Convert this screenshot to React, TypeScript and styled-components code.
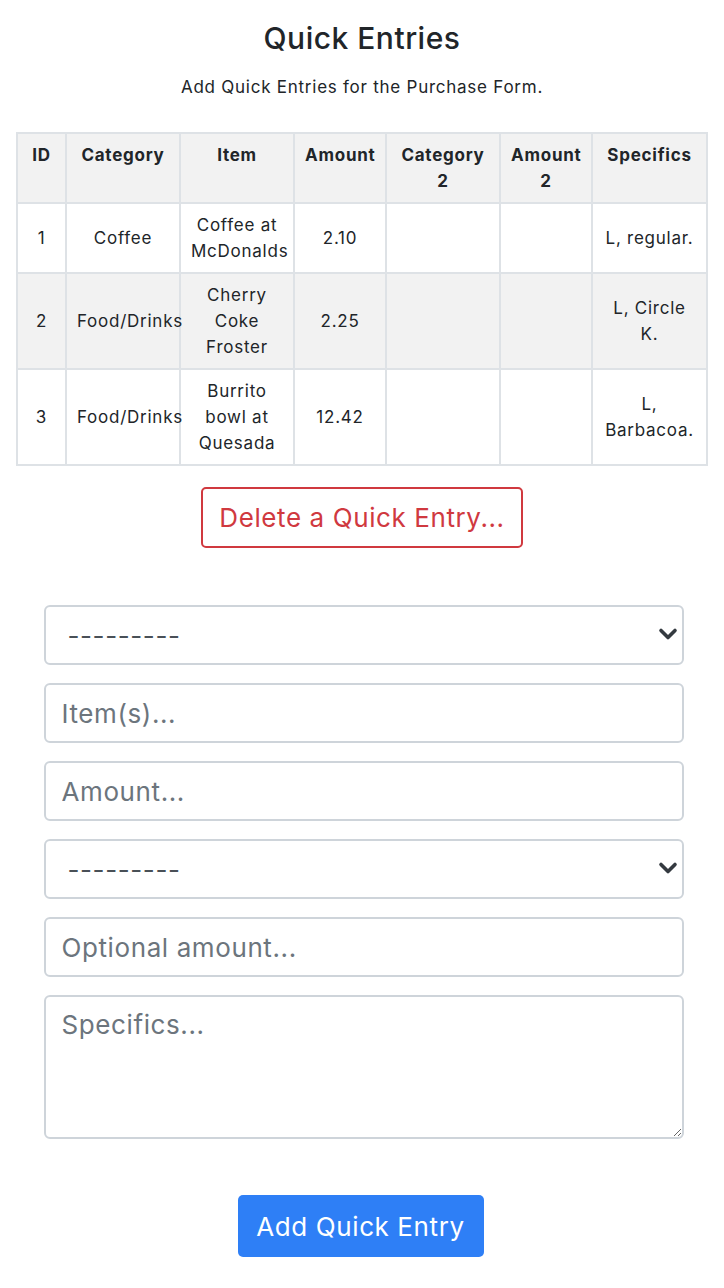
import React from "react";
import styled, { createGlobalStyle } from "styled-components";

const Global = createGlobalStyle`
  html, body { margin: 0; padding: 0; background: #fff; }
  body { font-family: Inter, Roboto, "Liberation Sans", sans-serif; color: #212529; }
  * { box-sizing: border-box; }
`;

const Page = styled.div`
  width: 724px;
  padding: 18px 16px 30px;
  display: flex;
  flex-direction: column;
  align-items: center;
`;

const Title = styled.h1`
  margin: 0;
  font-size: 30px;
  font-weight: 500;
  line-height: 40px;
  letter-spacing: 0.5px;
`;

const Subtitle = styled.p`
  margin: 16px 0 0;
  font-size: 17px;
  line-height: 26px;
  letter-spacing: 0.75px;
`;

const Table = styled.table`
  margin-top: 32px;
  width: 690px;
  border-collapse: collapse;
  font-size: 17px;
  line-height: 26px;
  letter-spacing: 0.75px;
  table-layout: fixed;
`;

const Th = styled.th<{ $w: number }>`
  width: ${(p) => p.$w}px;
  border: 2px solid #dee2e6;
  padding: 8px 10px;
  font-weight: 700;
  vertical-align: top;
  text-align: center;
  background: #f2f2f2;
`;

const Tr = styled.tr<{ $striped?: boolean }>`
  background: ${(p) => (p.$striped ? "#f2f2f2" : "#fff")};
`;

const Td = styled.td`
  border: 2px solid #dee2e6;
  padding: 8px 10px;
  text-align: center;
  vertical-align: middle;
  overflow: visible;
`;

const DeleteButton = styled.button`
  margin-top: 21px;
  width: 322px;
  height: 61px;
  border: 2px solid #d0393f;
  border-radius: 5px;
  background: #fff;
  color: #d0393f;
  font-family: inherit;
  font-size: 26px;
  letter-spacing: 0.6px;
`;

const Form = styled.form`
  margin: 57px 0 0 3px;
  width: 640px;
  display: flex;
  flex-direction: column;
  gap: 18px;
  align-items: center;
`;

const fieldBase = `
  width: 640px;
  border: 2px solid #ced4da;
  border-radius: 6px;
  background: #fff;
  font-family: Inter, Roboto, "Liberation Sans", sans-serif;
  font-size: 26px;
  letter-spacing: 0.6px;
  color: #495057;
  outline: none;
  &::placeholder { color: #6c757d; }
`;

const SelectWrap = styled.div`
  position: relative;
  width: 640px;
`;

const Select = styled.select`
  ${fieldBase}
  height: 60px;
  padding: 0 40px 0 22px;
  appearance: none;
  color: #495057;
`;

const Chevron = styled.svg`
  position: absolute;
  right: 6px;
  top: 22px;
  pointer-events: none;
`;

const Input = styled.input`
  ${fieldBase}
  height: 60px;
  padding: 0 16px;
`;

const TextArea = styled.textarea`
  ${fieldBase}
  height: 144px;
  padding: 10px 16px;
  resize: vertical;
  line-height: 36px;
`;

const AddButton = styled.button`
  margin: 38px 0 0 -6px;
  width: 246px;
  height: 62px;
  border: none;
  border-radius: 5px;
  background: #2e7ff6;
  color: #fff;
  font-family: inherit;
  font-size: 26px;
  letter-spacing: 0.6px;
`;

const cols = [
  { label: "ID", w: 49 },
  { label: "Category", w: 114 },
  { label: "Item", w: 114 },
  { label: "Amount", w: 92 },
  { label: "Category 2", w: 114 },
  { label: "Amount 2", w: 92 },
  { label: "Specifics", w: 115 },
];

const rows = [
  ["1", "Coffee", "Coffee at McDonalds", "2.10", "", "", "L, regular."],
  ["2", "Food/Drinks", "Cherry Coke Froster", "2.25", "", "", "L, Circle K."],
  ["3", "Food/Drinks", "Burrito bowl at Quesada", "12.42", "", "", "L, Barbacoa."],
];

function ChevronIcon() {
  return (
    <Chevron width="20" height="14" viewBox="0 0 20 14">
      <path d="M3 3.5 L10 10.5 L17 3.5" fill="none" stroke="#343a40" strokeWidth="3.6" strokeLinecap="round" strokeLinejoin="round" />
    </Chevron>
  );
}

export default function App() {
  return (
    <>
      <Global />
      <Page>
        <Title>Quick Entries</Title>
        <Subtitle>Add Quick Entries for the Purchase Form.</Subtitle>
        <Table>
          <thead>
            <tr>
              {cols.map((c) => (
                <Th key={c.label} $w={c.w}>{c.label}</Th>
              ))}
            </tr>
          </thead>
          <tbody>
            {rows.map((r, i) => (
              <Tr key={i} $striped={i % 2 === 1}>
                {r.map((v, j) => (
                  <Td key={j}>{v}</Td>
                ))}
              </Tr>
            ))}
          </tbody>
        </Table>
        <DeleteButton type="button">Delete a Quick Entry...</DeleteButton>
        <Form onSubmit={(e) => e.preventDefault()}>
          <SelectWrap>
            <Select defaultValue="">
              <option value="">---------</option>
            </Select>
            <ChevronIcon />
          </SelectWrap>
          <Input placeholder="Item(s)..." />
          <Input placeholder="Amount..." />
          <SelectWrap>
            <Select defaultValue="">
              <option value="">---------</option>
            </Select>
            <ChevronIcon />
          </SelectWrap>
          <Input placeholder="Optional amount..." />
          <TextArea placeholder="Specifics..." />
          <AddButton type="submit">Add Quick Entry</AddButton>
        </Form>
      </Page>
    </>
  );
}
